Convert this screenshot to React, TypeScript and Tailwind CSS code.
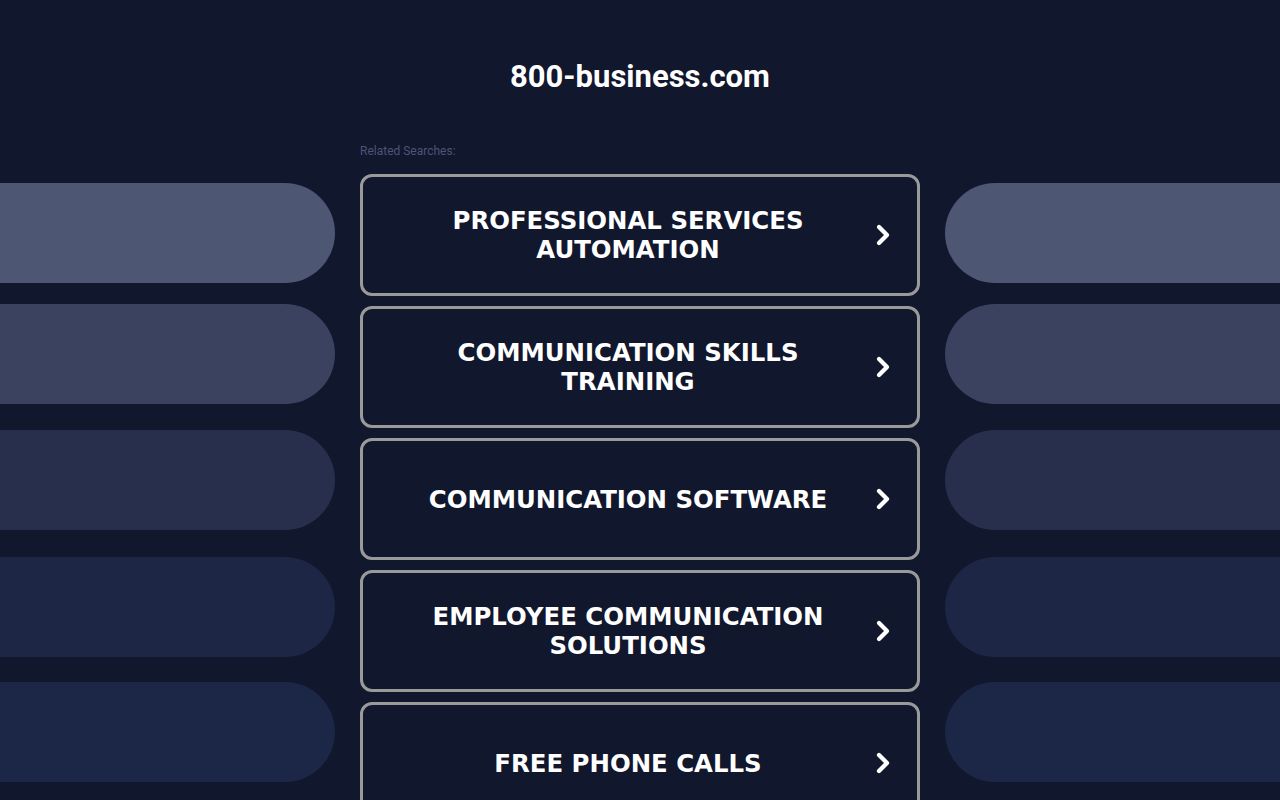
import { ChevronRight } from "lucide-react";

const LINKS = [
  "PROFESSIONAL SERVICES AUTOMATION",
  "COMMUNICATION SKILLS TRAINING",
  "COMMUNICATION SOFTWARE",
  "EMPLOYEE COMMUNICATION SOLUTIONS",
  "FREE PHONE CALLS",
];

const PILLS = [
  { color: "bg-[#4d5673]", mt: "mt-[183px]" },
  { color: "bg-[#3a4260]", mt: "mt-[21px]" },
  { color: "bg-[#272f4d]", mt: "mt-[26px]" },
  { color: "bg-[#1d2645]", mt: "mt-[27px]" },
  { color: "bg-[#1c2747]", mt: "mt-[25px]" },
];

export default function App() {
  return (
    <div className="min-h-screen h-[800px] overflow-hidden bg-[#11172d] flex justify-between">
      {/* left pills */}
      <div className="w-[335px] flex flex-col shrink-0">
        {PILLS.map((p, i) => (
          <div key={i} className={`${p.mt} ${p.color} h-[100px] rounded-r-[50px] shrink-0`} />
        ))}
      </div>

      {/* center */}
      <div className="w-[560px] flex flex-col shrink-0">
        <h1 className="mt-[58px] text-center text-white font-bold text-[31px] leading-[38px] font-['Roboto',sans-serif]">
          800-business.com
        </h1>
        <p className="mt-[47px] text-[12px] leading-[16px] text-[#4b5577] font-['Roboto',sans-serif]">
          Related Searches:
        </p>
        <div className="mt-[15px] flex flex-col gap-[10px]">
          {LINKS.map((t) => (
            <a
              key={t}
              href="#"
              className="h-[122px] shrink-0 border-[3px] border-[#9a9a9a] rounded-[12px] flex items-center pl-[46px] pr-[18px]"
            >
              <span className="flex-1 text-center text-white font-bold text-[24.4px] leading-[29px] font-['DejaVu_Sans',sans-serif]">
                {t}
              </span>
              <ChevronRight className="text-white w-[32px] h-[32px] shrink-0 ml-[20px]" strokeWidth={3.2} />
            </a>
          ))}
        </div>
      </div>

      {/* right pills */}
      <div className="w-[335px] flex flex-col shrink-0">
        {PILLS.map((p, i) => (
          <div key={i} className={`${p.mt} ${p.color} h-[100px] rounded-l-[50px] shrink-0`} />
        ))}
      </div>
    </div>
  );
}
